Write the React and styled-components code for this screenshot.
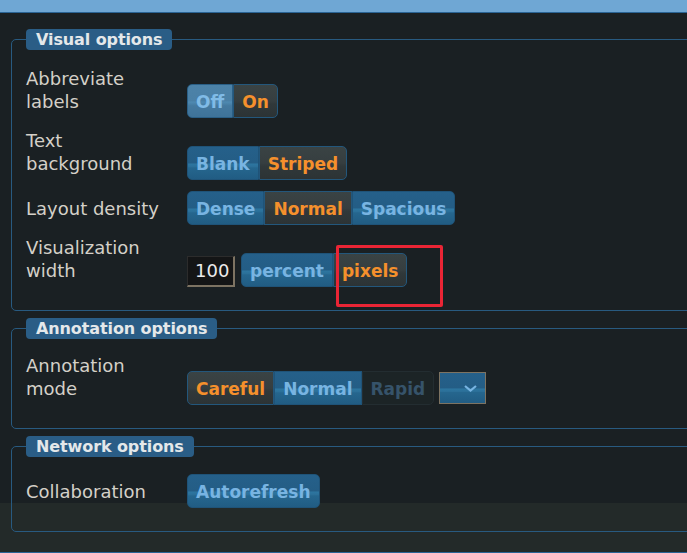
import React from 'react';
import styled, { createGlobalStyle, css } from 'styled-components';

const GlobalStyle = createGlobalStyle`
  html, body {
    margin: 0;
    padding: 0;
    background: #1a2023;
    font-family: 'DejaVu Sans', Verdana, sans-serif;
  }
`;

const Dialog = styled.div`
  position: relative;
  width: 687px;
  height: 553px;
  box-sizing: border-box;
  overflow: hidden;
  border-bottom: 1px solid #2a6496;
  background: linear-gradient(to bottom, #1a2023 503px, #232a29 503px);
`;

const TitleBar = styled.div`
  height: 12px;
  background: #6fa7d4;
  border-bottom: 1px solid #2b6494;
`;

const Body = styled.div`
  padding: 16px 0 0 11px;
`;

const Group = styled.fieldset`
  margin: 0 -20px 7px 0;
  padding: ${({ $top }) => $top ?? 17}px 14px 23px 14px;
  border: 1px solid #285a80;
  border-radius: 5px;
  min-width: 0;
`;

const Legend = styled.legend`
  padding: 0 10px;
  height: 21px;
  line-height: 21px;
  background: #2a5d86;
  border-radius: 4px;
  color: #e4e8ea;
  font-size: 16px;
  font-weight: bold;
  letter-spacing: -0.1px;
`;

const Grid = styled.div`
  display: grid;
  grid-template-columns: 145px 1fr;
  column-gap: 16px;
  row-gap: 11px;
  align-items: last baseline;
`;

const Label = styled.div`
  color: #d4d0c8;
  font-size: 18px;
  line-height: 23px;
`;

const Controls = styled.div`
  display: flex;
  align-items: last baseline;
  gap: ${({ $gap }) => $gap || 0}px;
`;

const ButtonSet = styled.div`
  display: flex;
`;

const blueFill = css`
  background: linear-gradient(
    to bottom,
    #25608a 0%,
    #245d85 50%,
    #2d76a0 53%,
    #2b6f98 62%,
    #25668e 65%,
    #215c83 100%
  );
  border-color: #1f5378;
  color: #78b4e2;
`;

const Button = styled.button`
  font-family: 'DejaVu Sans', Verdana, sans-serif;
  font-size: 17px;
  font-weight: bold;
  line-height: 21px;
  padding: 7px 8px 4px;
  margin: 0;
  border: 1px solid;
  border-radius: 0;
  cursor: pointer;
  ${blueFill}

  &:first-child {
    border-top-left-radius: 5px;
    border-bottom-left-radius: 5px;
  }
  &:last-child {
    border-top-right-radius: 5px;
    border-bottom-right-radius: 5px;
  }

  ${({ $hover }) =>
    $hover &&
    css`
      background: linear-gradient(
        to bottom,
        #4c82a8 0%,
        #4a80a6 50%,
        #4f8ab2 53%,
        #44799f 65%,
        #3f7399 100%
      );
      border-color: #2a5f86;
      color: #80bbe6;
    `}

  ${({ $active }) =>
    $active &&
    css`
      background: linear-gradient(to bottom, #3a4344 0%, #363e40 50%, #30383a 60%, #2c3335 100%);
      border-color: #23577c;
      color: #f5902c;
    `}

  ${({ disabled }) =>
    disabled &&
    css`
      background: #1c2426;
      border-color: #232d31;
      color: #36536a;
      cursor: default;
    `}
`;

const NumberInput = styled.input`
  width: 48px;
  height: 31px;
  box-sizing: border-box;
  padding: 0 0 0 7px;
  margin: 0;
  font-family: 'DejaVu Sans', Verdana, sans-serif;
  font-size: 18px;
  color: #ebebeb;
  background: #141516;
  border-style: solid;
  border-width: 1px 2px 2px 1px;
  border-color: #2c2c2c #7d7362 #7d7362 #2c2c2c;
  outline: none;
`;

const Dropdown = styled.button`
  display: flex;
  align-items: center;
  justify-content: flex-end;
  width: 47px;
  height: 32px;
  padding: 0 8px 0 0;
  margin: 0;
  align-self: center;
  border: 1px solid;
  ${blueFill}
  border-color: #7d7362;
`;

const Marker = styled.div`
  position: absolute;
  left: 336px;
  top: 245px;
  width: 107px;
  height: 62px;
  box-sizing: border-box;
  border: 3px solid #ea2535;
  border-radius: 2px;
  pointer-events: none;
`;

const Chevron = () => (
  <svg width="13" height="7" viewBox="0 0 13 7">
    <polyline points="1,1 6.5,5.5 12,1" fill="none" stroke="#78b4e2" strokeWidth="2.2" />
  </svg>
);

const Segmented = ({ options, value, hover, disabled = [] }) => (
  <ButtonSet>
    {options.map((opt) => (
      <Button
        key={opt}
        $active={opt === value}
        $hover={opt === hover}
        disabled={disabled.includes(opt)}
      >
        {opt}
      </Button>
    ))}
  </ButtonSet>
);

export default function App() {
  return (
    <>
      <GlobalStyle />
      <Dialog>
        <TitleBar />
        <Body>
          <Group>
            <Legend>Visual options</Legend>
            <Grid>
              <Label>Abbreviate labels</Label>
              <Controls>
                <Segmented options={['Off', 'On']} value="On" hover="Off" />
              </Controls>

              <Label>Text background</Label>
              <Controls>
                <Segmented options={['Blank', 'Striped']} value="Striped" />
              </Controls>

              <Label>Layout density</Label>
              <Controls>
                <Segmented options={['Dense', 'Normal', 'Spacious']} value="Normal" />
              </Controls>

              <Label>Visualization width</Label>
              <Controls $gap={6}>
                <NumberInput defaultValue="100" />
                <Segmented options={['percent', 'pixels']} value="pixels" />
              </Controls>
            </Grid>
          </Group>

          <Group $top={15}>
            <Legend>Annotation options</Legend>
            <Grid>
              <Label>Annotation mode</Label>
              <Controls $gap={5}>
                <Segmented
                  options={['Careful', 'Normal', 'Rapid']}
                  value="Careful"
                  disabled={['Rapid']}
                />
                <Dropdown aria-label="More modes">
                  <Chevron />
                </Dropdown>
              </Controls>
            </Grid>
          </Group>

          <Group>
            <Legend>Network options</Legend>
            <Grid>
              <Label>Collaboration</Label>
              <Controls>
                <ButtonSet>
                  <Button>Autorefresh</Button>
                </ButtonSet>
              </Controls>
            </Grid>
          </Group>
        </Body>
        <Marker />
      </Dialog>
    </>
  );
}
